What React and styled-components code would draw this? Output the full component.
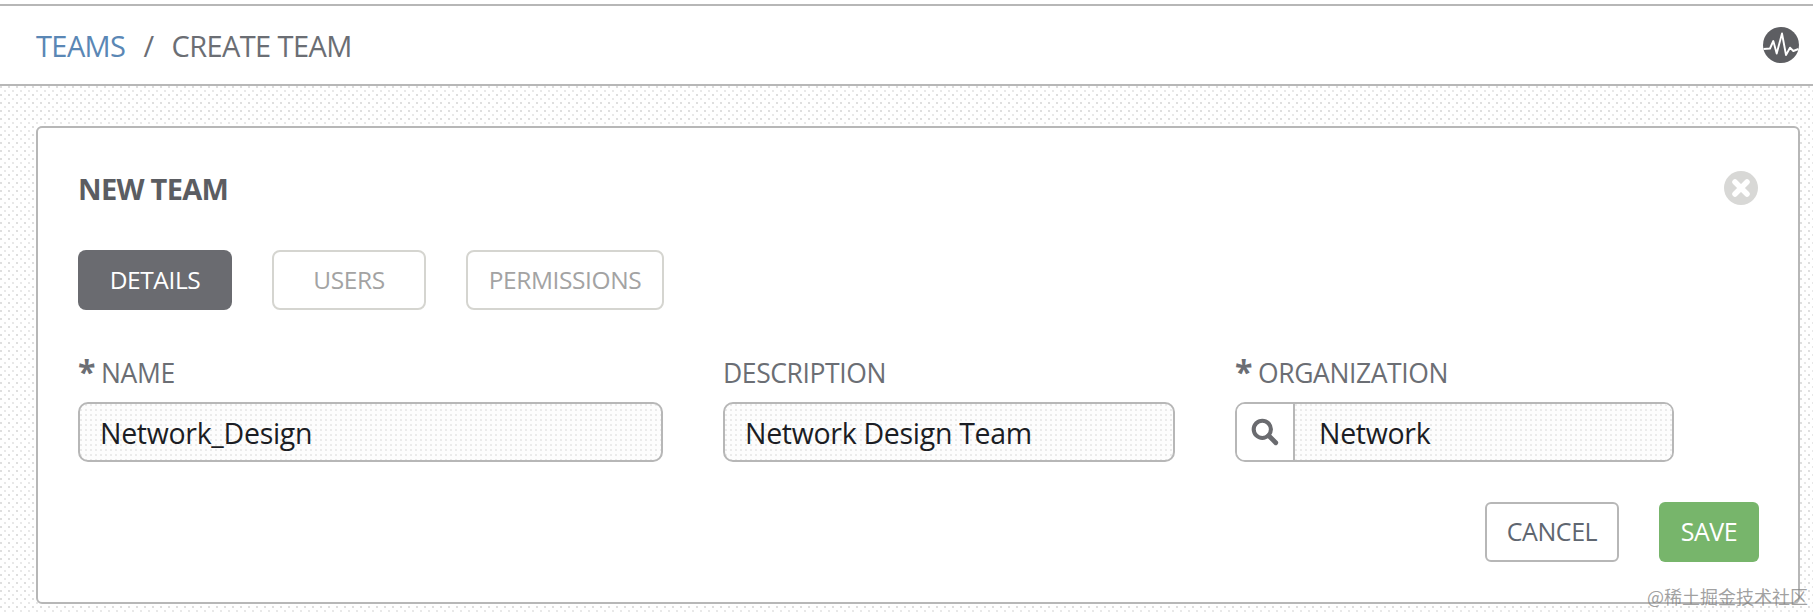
import React from "react";
import styled, { createGlobalStyle } from "styled-components";

const Global = createGlobalStyle`
  html, body { margin: 0; padding: 0; background: #fff; }
  body { font-family: "Open Sans", "Noto Sans", sans-serif; }
  * { box-sizing: border-box; }
`;

const dots = `
  radial-gradient(circle at 1px 1px, #dedede 0.7px, transparent 1px) 0 0 / 8px 8px,
  radial-gradient(circle at 1px 1px, #e8e8e8 0.7px, transparent 1px) 4px 4px / 8px 8px,
  #ffffff
`;

const fineDots = `
  radial-gradient(circle at 1px 1px, #e2e2e2 0.6px, transparent 0.9px) 0 0 / 5px 5px,
  #fdfdfd
`;

const Page = styled.div`
  position: relative;
  width: 1813px;
  height: 614px;
  overflow: hidden;
  padding-top: 4px;
  display: flex;
  flex-direction: column;
`;

const Header = styled.header`
  height: 82px;
  flex: none;
  border-top: 2px solid #b7b7b7;
  border-bottom: 2px solid #b7b7b7;
  background: #fff;
  display: flex;
  align-items: center;
  justify-content: space-between;
  padding: 0 14px 0 36px;
`;

const Crumbs = styled.nav`
  display: flex;
  align-items: center;
  font-size: 29px;
  letter-spacing: -0.6px;
  color: #6b6e74;
`;

const CrumbLink = styled.span`
  color: #5a87b5;
`;

const CrumbSep = styled.span`
  margin: 0 18px 0 18px;
  color: #6b6e74;
`;

const Main = styled.main`
  flex: 1;
  background: ${dots};
  padding: 40px 13px 0 36px;
`;

const Card = styled.section`
  height: 478px;
  background: #fff;
  border: 2px solid #b7b7b7;
  border-radius: 6px;
  padding: 40px 39px 0 40px;
`;

const CardHead = styled.div`
  display: flex;
  align-items: center;
  justify-content: space-between;
  height: 40px;
`;

const Title = styled.h2`
  margin: 0;
  font-size: 29px;
  font-weight: 700;
  letter-spacing: -0.7px;
  color: #5b5d62;
`;

const CloseIcon = styled.svg`
  width: 36px;
  height: 36px;
  display: block;
`;

const Tabs = styled.div`
  display: flex;
  gap: 40px;
  margin-top: 42px;
`;

const Tab = styled.div`
  width: ${(p) => p.$w}px;
  height: 60px;
  border-radius: 8px;
  display: flex;
  align-items: center;
  justify-content: center;
  padding-bottom: 2px;
  font-size: 24.5px;
  letter-spacing: -0.4px;
  background: ${(p) => (p.$active ? "#6a6b70" : "#fff")};
  color: ${(p) => (p.$active ? "#fff" : "#a3a3a3")};
  border: ${(p) => (p.$active ? "none" : "2px solid #d5d5d0")};
`;

const Fields = styled.div`
  display: flex;
  gap: 60px;
  margin-top: 43px;
`;

const Field = styled.div`
  width: ${(p) => p.$w}px;
  display: flex;
  flex-direction: column;
  gap: 11px;
`;

const Label = styled.label`
  height: 38px;
  display: flex;
  align-items: center;
  padding-top: 1px;
  font-size: 26.5px;
  letter-spacing: -0.4px;
  color: #6b6e74;
`;

const Star = styled.span`
  font-size: 32px;
  font-weight: 700;
  line-height: 32px;
  margin-right: 6px;
  position: relative;
  top: -1px;
`;

const Input = styled.div`
  height: 60px;
  border: 2px solid #b7b7b7;
  border-radius: 10px;
  background: ${fineDots};
  display: flex;
  align-items: center;
  padding-left: 20px;
  padding-top: 2px;
  font-size: 28.5px;
  letter-spacing: -0.3px;
  color: #1b1d24;
`;

const SearchGroup = styled.div`
  height: 60px;
  border: 2px solid #b7b7b7;
  border-radius: 10px;
  display: flex;
  overflow: hidden;
`;

const SearchAddon = styled.div`
  width: 58px;
  flex: none;
  border-right: 2px solid #b7b7b7;
  background: #fff;
  display: flex;
  align-items: center;
  justify-content: center;
`;

const SearchValue = styled.div`
  flex: 1;
  background: ${fineDots};
  display: flex;
  align-items: center;
  padding-left: 24px;
  padding-top: 2px;
  font-size: 28.5px;
  letter-spacing: -0.3px;
  color: #1b1d24;
`;

const Actions = styled.div`
  display: flex;
  justify-content: flex-end;
  gap: 40px;
  margin-top: 40px;
`;

const Button = styled.button`
  height: 60px;
  width: ${(p) => p.$w}px;
  border-radius: 6px;
  font-family: inherit;
  font-size: 25px;
  letter-spacing: -0.45px;
  padding: 0 0 2px;
  background: ${(p) => (p.$primary ? "#77b56b" : "#fff")};
  color: ${(p) => (p.$primary ? "#fff" : "#5f6670")};
  border: ${(p) => (p.$primary ? "none" : "2px solid #b7b7b7")};
`;

const Watermark = styled.div`
  position: absolute;
  left: 1647px;
  top: 584px;
  font-family: "Noto Sans CJK SC", sans-serif;
  font-size: 18px;
  line-height: 24px;
  color: rgba(130, 130, 130, 0.75);
  white-space: nowrap;
`;

function PulseIcon() {
  return (
    <svg width="36" height="36" viewBox="0 0 36 36" aria-hidden="true">
      <circle cx="18" cy="18" r="18" fill="#5d5e62" />
      <path
        d="M0.5 22 L7 21.5 L10.3 14 L13.7 26.5 L19 6.5 L23 28 L27 20.7 L30.3 24 L35.5 22"
        fill="none"
        stroke="#fff"
        strokeWidth="1.9"
        strokeLinejoin="round"
      />
    </svg>
  );
}

function SearchIcon() {
  return (
    <svg width="28" height="28" viewBox="0 0 26 26" aria-hidden="true">
      <circle cx="10.5" cy="10.5" r="8" fill="none" stroke="#6a6b6f" strokeWidth="3.8" />
      <path d="M16.5 16.5 L23 23" stroke="#6a6b6f" strokeWidth="4.4" strokeLinecap="round" />
    </svg>
  );
}

export default function App() {
  return (
    <Page>
      <Global />
      <Header>
        <Crumbs>
          <CrumbLink>TEAMS</CrumbLink>
          <CrumbSep>/</CrumbSep>
          <span>CREATE TEAM</span>
        </Crumbs>
        <PulseIcon />
      </Header>
      <Main>
        <Card>
          <CardHead>
            <Title>NEW TEAM</Title>
            <CloseIcon viewBox="0 0 36 36" aria-hidden="true">
              <circle cx="18" cy="18" r="17" fill="#d8d8d6" />
              <path d="M12 12 L24 24 M24 12 L12 24" stroke="#fff" strokeWidth="5.5" strokeLinecap="round" />
            </CloseIcon>
          </CardHead>
          <Tabs>
            <Tab $active $w={154}>DETAILS</Tab>
            <Tab $w={154}>USERS</Tab>
            <Tab $w={198}>PERMISSIONS</Tab>
          </Tabs>
          <Fields>
            <Field $w={585}>
              <Label><Star>*</Star>NAME</Label>
              <Input>Network_Design</Input>
            </Field>
            <Field $w={452}>
              <Label>DESCRIPTION</Label>
              <Input>Network Design Team</Input>
            </Field>
            <Field $w={439}>
              <Label><Star>*</Star>ORGANIZATION</Label>
              <SearchGroup>
                <SearchAddon><SearchIcon /></SearchAddon>
                <SearchValue>Network</SearchValue>
              </SearchGroup>
            </Field>
          </Fields>
          <Actions>
            <Button $w={134}>CANCEL</Button>
            <Button $primary $w={100}>SAVE</Button>
          </Actions>
        </Card>
      </Main>
      <Watermark>@稀土掘金技术社区</Watermark>
    </Page>
  );
}
